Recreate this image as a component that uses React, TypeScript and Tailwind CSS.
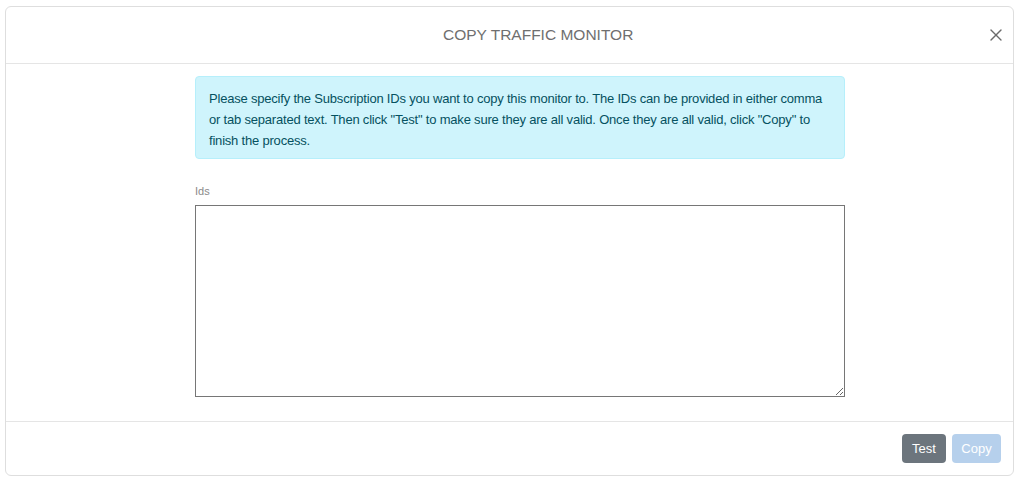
import { X } from "lucide-react";

export default function App() {
  return (
    <div className="h-[481px] w-[1024px] bg-white pt-[6px] pl-[5px] font-['Liberation_Sans',Arial,sans-serif]">
      <div className="flex h-[470px] w-[1009px] flex-col rounded-[6px] border border-[#dedede] bg-white">
        <div className="flex h-[57px] shrink-0 items-center border-b border-[#e5e5e5]">
          <h1 className="ml-[437px] text-[15.5px] text-[#6f6f6f]">COPY TRAFFIC MONITOR</h1>
          <button className="ml-auto mr-[5px] flex h-[24px] w-[24px] items-center justify-center text-[#6b6b6b]">
            <X size={20} strokeWidth={1.6} />
          </button>
        </div>

        <div className="flex-1">
          <div className="ml-[189px] mt-[12px] w-[650px]">
            <div className="rounded-[4px] border border-[#b6effb] bg-[#cff4fc] px-[13px] pt-[11px] pb-[7px] text-[13px] leading-[21px] tracking-[-0.2px] text-[#055160]">
              Please specify the Subscription IDs you want to copy this monitor to. The IDs can be provided in either comma
              <br />
              or tab separated text. Then click "Test" to make sure they are all valid. Once they are all valid, click "Copy" to
              <br />
              finish the process.
            </div>
            <label className="mt-[26px] block text-[11px] leading-[13px] text-[#8a8a8a]">Ids</label>
            <textarea className="mt-[7px] block h-[192px] w-[650px] resize-y border border-[#767676] bg-white outline-none" />
          </div>
        </div>

        <div className="flex h-[54px] shrink-0 items-center justify-end gap-[6px] border-t border-[#e5e5e5] pr-[12px]">
          <button className="h-[29px] w-[44px] rounded-[4px] bg-[#6c757d] text-[13px] text-white">Test</button>
          <button className="h-[29px] w-[49px] rounded-[4px] bg-[#b6d0ec] text-[13px] text-white">Copy</button>
        </div>
      </div>
    </div>
  );
}
